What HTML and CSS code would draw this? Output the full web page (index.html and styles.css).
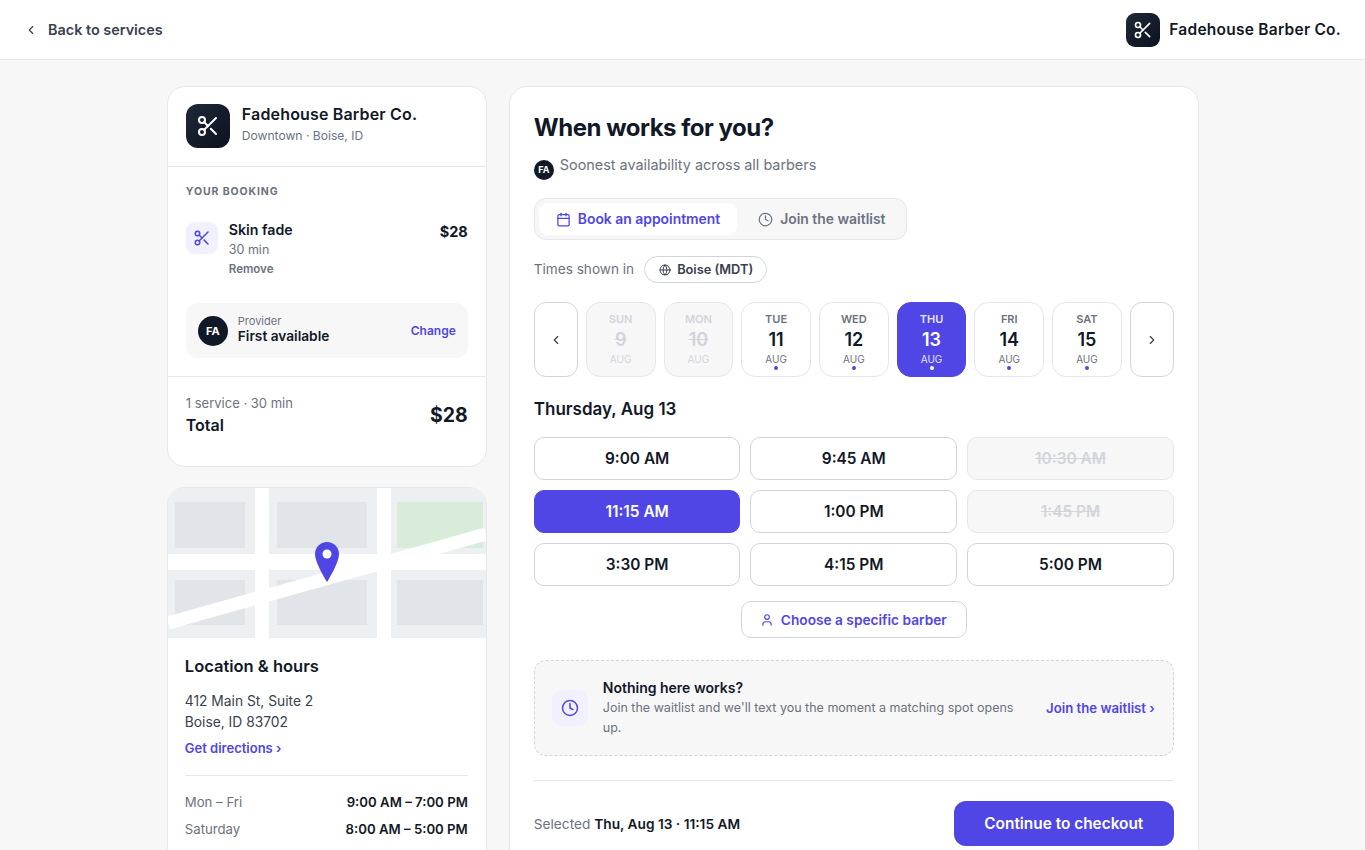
FILE: index.html
```html
<!DOCTYPE html>
<html lang="en">
<head>
  <meta charset="UTF-8">
  <title>Fadehouse Barber Co. - Choose a time</title>
  <meta name="viewport" content="width=device-width, initial-scale=1.0">
  <link rel="stylesheet" href="styles.css">
</head>
<body>
  <header class="topbar">
    <a class="back-link" href="#">
      <svg class="icon icon-14" viewBox="0 0 24 24"><path d="m15 18-6-6 6-6"/></svg>
      Back to services
    </a>
    <div class="brand">
      <span class="logo logo-small">
        <svg class="icon icon-20" viewBox="0 0 24 24"><circle cx="6" cy="6" r="3"/><path d="M8.12 8.12 12 12"/><path d="M20 4 8.12 15.88"/><circle cx="6" cy="18" r="3"/><path d="M14.8 14.8 20 20"/></svg>
      </span>
      <span class="brand-name">Fadehouse Barber Co.</span>
    </div>
  </header>

  <main class="layout">
    <aside class="sidebar">
      <section class="card">
        <div class="shop">
          <span class="logo">
            <svg class="icon icon-24" viewBox="0 0 24 24"><circle cx="6" cy="6" r="3"/><path d="M8.12 8.12 12 12"/><path d="M20 4 8.12 15.88"/><circle cx="6" cy="18" r="3"/><path d="M14.8 14.8 20 20"/></svg>
          </span>
          <div class="shop-text">
            <div class="shop-name">Fadehouse Barber Co.</div>
            <div class="shop-place">Downtown · Boise, ID</div>
          </div>
        </div>

        <div class="booking">
          <div class="eyebrow">YOUR BOOKING</div>
          <div class="service">
            <span class="service-icon">
              <svg class="icon icon-18" viewBox="0 0 24 24"><circle cx="6" cy="6" r="3"/><path d="M8.12 8.12 12 12"/><path d="M20 4 8.12 15.88"/><circle cx="6" cy="18" r="3"/><path d="M14.8 14.8 20 20"/></svg>
            </span>
            <div class="service-info">
              <div class="service-name">Skin fade</div>
              <div class="service-time">30 min</div>
              <a class="service-remove" href="#">Remove</a>
            </div>
            <div class="service-price">$28</div>
          </div>
          <div class="provider">
            <span class="avatar avatar-large">FA</span>
            <div class="provider-info">
              <div class="provider-label">Provider</div>
              <div class="provider-name">First available</div>
            </div>
            <a class="provider-change" href="#">Change</a>
          </div>
        </div>

        <div class="total">
          <div>
            <div class="total-meta">1 service · 30 min</div>
            <div class="total-label">Total</div>
          </div>
          <div class="total-price">$28</div>
        </div>
      </section>

      <section class="card">
        <div class="map">
          <svg class="map-art" viewBox="0 0 318 150">
            <rect width="318" height="150" fill="#edf0f3"/>
            <rect x="7" y="14" width="70" height="46" fill="#e1e5ea"/>
            <rect x="109" y="14" width="90" height="46" fill="#e1e5ea"/>
            <rect x="229" y="14" width="86" height="46" fill="#d9ecd9"/>
            <rect x="7" y="92" width="70" height="45" fill="#e1e5ea"/>
            <rect x="109" y="92" width="90" height="45" fill="#e1e5ea"/>
            <rect x="229" y="92" width="86" height="45" fill="#e1e5ea"/>
            <rect x="87" width="14" height="150" fill="#fff"/>
            <rect x="209" width="14" height="150" fill="#fff"/>
            <rect y="66" width="318" height="16" fill="#fff"/>
            <path d="M0 135 318 46" stroke="#fff" stroke-width="13"/>
            <path d="M159 54c-6.600 0-12 5.200-12 12 0 9 12 28 12 28s12-19 12-28c0-6.800-5.400-12-12-12z" fill="#4f46e5"/>
            <circle cx="159" cy="66" r="4.500" fill="#fff"/>
          </svg>
        </div>
        <div class="location">
          <h2 class="location-title">Location &amp; hours</h2>
          <p class="address">412 Main St, Suite 2<br>Boise, ID 83702</p>
          <a class="directions" href="#">Get directions ›</a>
          <div class="hours">
            <div class="hours-row"><span>Mon – Fri</span><strong>9:00 AM – 7:00 PM</strong></div>
            <div class="hours-row"><span>Saturday</span><strong>8:00 AM – 5:00 PM</strong></div>
            <div class="hours-row"><span>Sunday</span><strong>Closed</strong></div>
          </div>
        </div>
      </section>
    </aside>

    <section class="card panel">
      <h1 class="panel-title">When works for you?</h1>
      <div class="panel-sub"><span class="avatar avatar-small">FA</span><span>Soonest availability across all barbers</span></div>

      <div class="tabs">
        <button class="tab tab-active">
          <svg class="icon icon-15" viewBox="0 0 24 24"><path d="M8 2v4"/><path d="M16 2v4"/><rect x="3" y="4" width="18" height="18" rx="2"/><path d="M3 10h18"/></svg>
          Book an appointment
        </button>
        <button class="tab">
          <svg class="icon icon-15" viewBox="0 0 24 24"><circle cx="12" cy="12" r="10"/><path d="M12 6v6l4 2"/></svg>
          Join the waitlist
        </button>
      </div>

      <div class="zone">
        <span class="zone-label">Times shown in</span>
        <button class="zone-pill">
          <svg class="icon icon-12" viewBox="0 0 24 24"><circle cx="12" cy="12" r="10"/><path d="M12 2a14.500 14.500 0 0 0 0 20 14.500 14.500 0 0 0 0-20"/><path d="M2 12h20"/></svg>
          Boise (MDT)
        </button>
      </div>

      <div class="dates">
        <button class="date-nav"><svg class="icon icon-14" viewBox="0 0 24 24"><path d="m15 18-6-6 6-6"/></svg></button>
        <button class="day day-off"><span class="day-name">SUN</span><span class="day-num">9</span><span class="day-month">AUG</span></button>
        <button class="day day-off"><span class="day-name">MON</span><span class="day-num">10</span><span class="day-month">AUG</span></button>
        <button class="day"><span class="day-name">TUE</span><span class="day-num">11</span><span class="day-month">AUG</span><i class="day-dot"></i></button>
        <button class="day"><span class="day-name">WED</span><span class="day-num">12</span><span class="day-month">AUG</span><i class="day-dot"></i></button>
        <button class="day day-active"><span class="day-name">THU</span><span class="day-num">13</span><span class="day-month">AUG</span><i class="day-dot"></i></button>
        <button class="day"><span class="day-name">FRI</span><span class="day-num">14</span><span class="day-month">AUG</span><i class="day-dot"></i></button>
        <button class="day"><span class="day-name">SAT</span><span class="day-num">15</span><span class="day-month">AUG</span><i class="day-dot"></i></button>
        <button class="date-nav"><svg class="icon icon-14" viewBox="0 0 24 24"><path d="m9 18 6-6-6-6"/></svg></button>
      </div>

      <h2 class="date-title">Thursday, Aug 13</h2>

      <div class="slots">
        <button class="slot">9:00 AM</button>
        <button class="slot">9:45 AM</button>
        <button class="slot slot-off">10:30 AM</button>
        <button class="slot slot-active">11:15 AM</button>
        <button class="slot">1:00 PM</button>
        <button class="slot slot-off">1:45 PM</button>
        <button class="slot">3:30 PM</button>
        <button class="slot">4:15 PM</button>
        <button class="slot">5:00 PM</button>
      </div>

      <div class="barber-wrap">
        <button class="barber-btn">
          <svg class="icon icon-14" viewBox="0 0 24 24"><path d="M19 21v-2a4 4 0 0 0-4-4H9a4 4 0 0 0-4 4v2"/><circle cx="12" cy="7" r="4"/></svg>
          Choose a specific barber
        </button>
      </div>

      <div class="waitlist">
        <span class="waitlist-icon">
          <svg class="icon icon-18" viewBox="0 0 24 24"><circle cx="12" cy="12" r="10"/><path d="M12 6v6l4 2"/></svg>
        </span>
        <div class="waitlist-text">
          <div class="waitlist-title">Nothing here works?</div>
          <div class="waitlist-desc">Join the waitlist and we'll text you the moment a matching spot opens up.</div>
        </div>
        <a class="waitlist-link" href="#">Join the waitlist ›</a>
      </div>

      <div class="footer">
        <div class="selected">Selected <strong>Thu, Aug 13 · 11:15 AM</strong></div>
        <button class="continue">Continue to checkout</button>
      </div>
    </section>
  </main>
</body>
</html>
```

FILE: styles.css
```css
:root {
  --primary: #4f46e5;
  --ink: #111827;
  --text: #374151;
  --muted: #6b7280;
  --line: #e5e7eb;
  --bg: #f7f7f8;
  --tint: #f1f0fe;
}

* {
  box-sizing: border-box;
}

body {
  margin: 0;
  font-family: "Inter", sans-serif;
  background-color: var(--bg);
  color: var(--ink);
}

a {
  text-decoration: none;
}

button {
  font-family: inherit;
  cursor: pointer;
}

.icon {
  fill: none;
  stroke: currentColor;
  stroke-width: 2;
  stroke-linecap: round;
  stroke-linejoin: round;
  flex: none;
}
.icon-12 { width: 12px; height: 12px; }
.icon-14 { width: 14px; height: 14px; }
.icon-15 { width: 15px; height: 15px; }
.icon-18 { width: 18px; height: 18px; }
.icon-20 { width: 20px; height: 20px; }
.icon-24 { width: 24px; height: 24px; }

/* top bar */
.topbar {
  height: 60px;
  background: white;
  border-bottom: 1px solid var(--line);
  padding: 0 24px;
  display: flex;
  align-items: center;
  justify-content: space-between;
}
.back-link {
  display: flex;
  align-items: center;
  gap: 10px;
  font-size: 14.400px;
  font-weight: 600;
  color: var(--text);
}
.brand {
  display: flex;
  align-items: center;
  gap: 9px;
}
.brand-name {
  font-size: 15.500px;
  font-weight: 600;
  letter-spacing: 0.016em;
}
.logo {
  width: 44px;
  height: 44px;
  border-radius: 12px;
  background: linear-gradient(135deg, #1f2937, #0b1120);
  color: white;
  display: flex;
  align-items: center;
  justify-content: center;
  flex: none;
}
.logo-small {
  width: 34px;
  height: 34px;
  border-radius: 9px;
}

/* page layout */
.layout {
  width: 1032px;
  margin-left: 166.800px;
  padding: 26px 0;
  display: grid;
  grid-template-columns: 320px 1fr;
  gap: 22px;
  align-items: start;
}
.sidebar {
  display: flex;
  flex-direction: column;
  gap: 20px;
}
.card {
  background: white;
  border: 1px solid var(--line);
  border-radius: 18px;
  overflow: hidden;
}

/* booking summary */
.shop {
  display: flex;
  align-items: center;
  gap: 12px;
  padding: 17px 18px 18px;
  border-bottom: 1px solid var(--line);
}
.shop-text {
  margin-top: -5px;
}
.shop-name {
  font-size: 16px;
  font-weight: 600;
  line-height: 22px;
  letter-spacing: 0.01em;
  margin-bottom: 2px;
}
.shop-place {
  font-size: 12.100px;
  line-height: 18px;
  color: var(--muted);
}
.booking {
  padding: 18px 18px 18px;
  border-bottom: 1px solid var(--line);
}
.eyebrow {
  font-size: 10.500px;
  font-weight: 700;
  letter-spacing: 0.085em;
  line-height: 14px;
  color: var(--muted);
}
.service {
  display: flex;
  gap: 11px;
  margin-top: 23px;
}
.service-icon {
  width: 32px;
  height: 32px;
  border-radius: 9px;
  background: var(--tint);
  color: var(--primary);
  display: flex;
  align-items: center;
  justify-content: center;
  flex: none;
}
.service-info {
  flex: 1;
  margin-top: -2px;
}
.service-name {
  font-size: 14.200px;
  font-weight: 600;
  line-height: 20px;
}
.service-time {
  font-size: 12.500px;
  line-height: 20px;
  color: var(--muted);
}
.service-remove {
  display: block;
  font-size: 11.500px;
  font-weight: 600;
  line-height: 18px;
  color: var(--muted);
}
.service-price {
  margin-top: 1px;
  font-size: 14.500px;
  font-weight: 700;
}
.provider {
  display: flex;
  align-items: center;
  gap: 10px;
  margin-top: 25px;
  padding: 0 12px;
  height: 55px;
  border-radius: 12px;
  background: var(--bg);
}
.avatar {
  border-radius: 50%;
  background: var(--ink);
  color: white;
  font-weight: 700;
  display: inline-flex;
  align-items: center;
  justify-content: center;
  flex: none;
}
.avatar-large {
  width: 30px;
  height: 30px;
  font-size: 11px;
}
.avatar-small {
  width: 20px;
  height: 20px;
  font-size: 9px;
  margin-top: 6px;
}
.provider-info {
  flex: 1;
  margin-top: -3px;
}
.provider-label {
  font-size: 11px;
  line-height: 14px;
  color: var(--muted);
}
.provider-name {
  font-size: 13.700px;
  font-weight: 600;
  line-height: 17px;
}
.provider-change {
  font-size: 12px;
  font-weight: 600;
  color: var(--primary);
}
.total {
  display: flex;
  align-items: center;
  justify-content: space-between;
  padding: 16px 18px 29px;
}
.total-meta {
  font-size: 13px;
  line-height: 20px;
  color: var(--muted);
}
.total-label {
  font-size: 16px;
  font-weight: 600;
  line-height: 24px;
}
.total-price {
  font-size: 19.500px;
  font-weight: 700;
}

/* map + hours */
.map-art {
  display: block;
  width: 100%;
  height: 150px;
}
.location {
  padding: 17px 18px 20px 17px;
}
.location-title {
  margin: 0;
  font-size: 16.500px;
  font-weight: 600;
  line-height: 22px;
}
.address {
  margin: 14px 0 0;
  font-size: 13.800px;
  line-height: 21px;
  color: var(--text);
}
.directions {
  display: block;
  margin-top: 6px;
  font-size: 13px;
  font-weight: 600;
  line-height: 18px;
  color: var(--primary);
}
.hours {
  margin-top: 18px;
  padding-top: 13px;
  border-top: 1px solid var(--line);
}
.hours-row {
  display: flex;
  justify-content: space-between;
  font-size: 13.200px;
  line-height: 27px;
  color: var(--muted);
}
.hours-row strong {
  font-weight: 600;
  color: var(--ink);
}

/* right panel */
.panel {
  padding: 24px;
}
.panel-title {
  margin: 0;
  font-size: 24px;
  font-weight: 700;
  line-height: 34px;
  letter-spacing: -0.02em;
}
.panel-sub {
  display: flex;
  align-items: flex-start;
  gap: 6px;
  margin-top: 9px;
  font-size: 14.400px;
  line-height: 22px;
  color: var(--muted);
}
.tabs {
  display: inline-flex;
  margin-top: 18px;
  padding: 4px;
  gap: 4px;
  background: var(--bg);
  border: 1px solid var(--line);
  border-radius: 12px;
  vertical-align: top;
}
.tab {
  display: flex;
  align-items: center;
  gap: 7px;
  height: 32px;
  padding: 0 17px;
  border: none;
  border-radius: 9px;
  background: none;
  font-size: 13.900px;
  font-weight: 600;
  color: var(--muted);
}
.tab-active {
  background: white;
  color: var(--primary);
}
.zone {
  display: flex;
  align-items: center;
  gap: 10px;
  margin-top: 16px;
  font-size: 13.600px;
  color: var(--muted);
}
.zone-label {
  margin-top: -1px;
}
.zone-pill {
  display: flex;
  align-items: center;
  gap: 6px;
  height: 27px;
  padding: 0 13px 0 14px;
  border: 1px solid #d1d5db;
  border-radius: 14px;
  background: white;
  font-size: 12.800px;
  font-weight: 600;
  color: var(--text);
}
.dates {
  display: flex;
  gap: 8px;
  margin-top: 19px;
}
.date-nav {
  width: 44px;
  height: 75px;
  flex: none;
  display: flex;
  align-items: center;
  justify-content: center;
  padding: 0;
  border: 1px solid #d1d5db;
  border-radius: 12px;
  background: white;
  color: var(--text);
}
.day {
  position: relative;
  flex: 1;
  height: 75px;
  padding: 9px 0 0;
  display: flex;
  flex-direction: column;
  align-items: center;
  border: 1px solid var(--line);
  border-radius: 14px;
  background: white;
  color: var(--ink);
}
.day-name {
  font-size: 11px;
  font-weight: 600;
  line-height: 14px;
  color: var(--muted);
}
.day-num {
  margin-top: 1px;
  font-size: 18px;
  font-weight: 600;
  line-height: 25px;
}
.day-month {
  font-size: 10px;
  line-height: 14px;
  color: var(--muted);
}
.day-dot {
  position: absolute;
  bottom: 6px;
  width: 4px;
  height: 4px;
  border-radius: 50%;
  background: var(--primary);
}
.day-off {
  background: var(--bg);
  color: #d1d5db;
}
.day-off .day-name,
.day-off .day-month {
  color: #d1d5db;
}
.day-off .day-num {
  text-decoration: line-through;
}
.day-active {
  background: var(--primary);
  border-color: var(--primary);
  color: white;
}
.day-active .day-name,
.day-active .day-month {
  color: #e5e3fb;
}
.day-active .day-dot {
  background: white;
}
.date-title {
  margin: 20px 0 0;
  font-size: 17px;
  font-weight: 600;
  line-height: 24px;
}
.slots {
  display: grid;
  grid-template-columns: repeat(3, 1fr);
  gap: 10px;
  margin-top: 16px;
}
.slot {
  height: 43px;
  border: 1px solid #d1d5db;
  border-radius: 10px;
  background: white;
  font-size: 15.400px;
  font-weight: 600;
  color: var(--ink);
}
.slot-off {
  background: var(--bg);
  border-color: var(--line);
  color: #d1d5db;
  text-decoration: line-through;
}
.slot-active {
  background: var(--primary);
  border-color: var(--primary);
  color: white;
}
.barber-wrap {
  display: flex;
  justify-content: center;
  margin-top: 15px;
}
.barber-btn {
  display: flex;
  align-items: center;
  gap: 7px;
  height: 37px;
  padding: 0 19px 0 18px;
  border: 1px solid #d1d5db;
  border-radius: 10px;
  background: white;
  font-size: 13.700px;
  font-weight: 600;
  color: var(--primary);
}
.waitlist {
  display: flex;
  align-items: center;
  gap: 15px;
  margin-top: 22px;
  padding: 16px 18px 16px 17px;
  height: 96px;
  border: 1px dashed #d1d5db;
  border-radius: 12px;
  background: var(--bg);
}
.waitlist-icon {
  width: 36px;
  height: 36px;
  border-radius: 10px;
  background: var(--tint);
  color: var(--primary);
  display: flex;
  align-items: center;
  justify-content: center;
  flex: none;
}
.waitlist-text {
  flex: 1;
}
.waitlist-title {
  font-size: 14px;
  font-weight: 600;
  line-height: 20px;
}
.waitlist-desc {
  font-size: 12.500px;
  line-height: 20px;
  color: var(--muted);
}
.waitlist-link {
  font-size: 13.200px;
  font-weight: 600;
  color: var(--primary);
  white-space: nowrap;
}
.footer {
  display: flex;
  align-items: center;
  justify-content: space-between;
  margin-top: 24px;
  padding-top: 20px;
  border-top: 1px solid var(--line);
}
.selected {
  font-size: 13.700px;
  color: var(--muted);
}
.selected strong {
  font-weight: 600;
  color: var(--ink);
}
.continue {
  width: 220px;
  height: 45px;
  border: none;
  border-radius: 12px;
  background: var(--primary);
  font-size: 15.400px;
  font-weight: 600;
  color: white;
}
```
